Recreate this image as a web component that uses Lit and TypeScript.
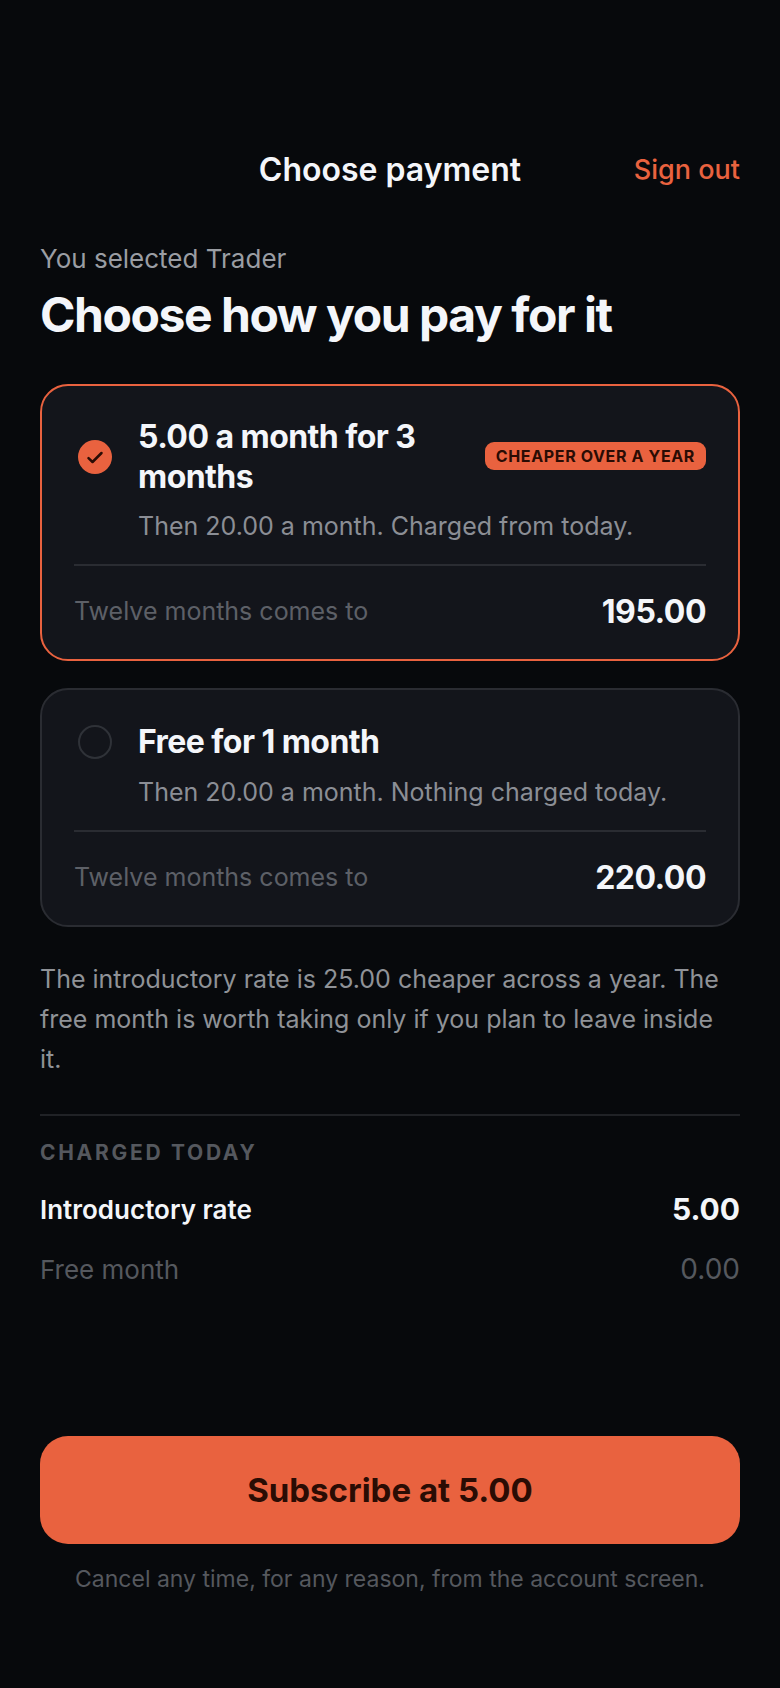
import { LitElement, html, css } from "lit";
import { customElement } from "lit/decorators.js";

@customElement("app-root")
export class AppRoot extends LitElement {
  static styles = css`
    :host { display: block; font-family: Inter, "Liberation Sans", sans-serif; background: #07090c; color: #f4f6fa; }
    .page { box-sizing: border-box; height: 1688px; padding: 148px 40px 0; display: flex; flex-direction: column; }
    .top { display: grid; grid-template-columns: 1fr auto 1fr; align-items: center; height: 42px; }
    .title { grid-column: 2; font-size: 32px; font-weight: 600; color: #f4f6fa; }
    .out { justify-self: end; font-size: 27px; font-weight: 500; color: #e9623f; }
    .sel { margin-top: 51px; font-size: 26px; line-height: 36px; color: #9a9da3; }
    h1 { margin: 8px 0 0; font-size: 48px; line-height: 60px; font-weight: 700; letter-spacing: -1.44px; color: #f4f6fa; }
    .cards { margin-top: 39px; display: flex; flex-direction: column; gap: 27px; }
    .card { background: #13151b; border: 2px solid #2a2c32; border-radius: 28px; padding: 31px 32px 24px; }
    .card.on { border-color: #e9623f; }
    .head { display: flex; align-items: center; gap: 26px; padding-left: 4px; min-height: 42px; }
    .radio { flex: none; box-sizing: border-box; width: 34px; height: 34px; border-radius: 50%; border: 2px solid #2f3238; display: flex; align-items: center; justify-content: center; }
    .on .radio { background: #e9623f; border: none; }
    .name { flex: 1; font-size: 32px; line-height: 40px; font-weight: 700; letter-spacing: -0.55px; color: #f4f6fa; }
    .badge { flex: none; background: #e9623f; color: #2a0c04; font-size: 16px; line-height: 28px; font-weight: 700; letter-spacing: 0.64px; padding: 0 11px; border-radius: 9px; margin-bottom: 2px; }
    .sub { margin: 11px 0 0 64px; font-size: 25px; line-height: 36px; color: #8b8e95; }
    .line { height: 2px; background: #2a2c32; margin-top: 20px; }
    .foot { display: flex; justify-content: space-between; align-items: center; margin-top: 21px; height: 48px; }
    .foot span { font-size: 25px; color: #5d6067; }
    .foot b { font-size: 32px; font-weight: 700; letter-spacing: -0.5px; color: #f4f6fa; }
    .note { margin: 32px 0 0; font-size: 25px; line-height: 40px; color: #8f9297; }
    .rule { height: 2px; background: #202226; margin-top: 35px; }
    .label { margin-top: 24px; font-size: 21px; line-height: 26px; font-weight: 700; letter-spacing: 2.7px; color: #55585e; }
    .row { display: flex; justify-content: space-between; align-items: center; }
    .r1 { margin-top: 21px; height: 44px; }
    .r1 span { font-size: 26px; font-weight: 600; color: #f4f6fa; }
    .r1 b { font-size: 30px; font-weight: 700; color: #f4f6fa; }
    .r2 { margin-top: 16px; height: 44px; font-size: 26px; color: #55585e; }
    .r2 span + span { font-size: 28px; }
    .cta { margin-top: auto; height: 108px; border-radius: 28px; background: #e9623f; color: #2a0c04; display: flex; align-items: center; justify-content: center; font-size: 33px; font-weight: 700; }
    .fine { margin: 18px 0 92px; text-align: center; font-size: 23px; line-height: 34px; color: #55585e; }
  `;

  private plan(on: boolean, name: string, sub: string, total: string) {
    return html`<div class="card ${on ? "on" : ""}">
      <div class="head">
        <div class="radio">${on ? html`<svg width="34" height="34" viewBox="0 0 34 34" fill="none"><path d="M10.5 18.2l4 3.8 9-9" stroke="#2a0c04" stroke-width="2.5" stroke-linecap="round" stroke-linejoin="round"/></svg>` : ""}</div>
        <div class="name">${name}</div>
        ${on ? html`<div class="badge">CHEAPER OVER A YEAR</div>` : ""}
      </div>
      <div class="sub">${sub}</div>
      <div class="line"></div>
      <div class="foot"><span>Twelve months comes to</span><b>${total}</b></div>
    </div>`;
  }

  render() {
    return html`<div class="page">
      <div class="top"><div class="title">Choose payment</div><div class="out">Sign out</div></div>
      <div class="sel">You selected Trader</div>
      <h1>Choose how you pay for it</h1>
      <div class="cards">
        ${this.plan(true, "5.00 a month for 3 months", "Then 20.00 a month. Charged from today.", "195.00")}
        ${this.plan(false, "Free for 1 month", "Then 20.00 a month. Nothing charged today.", "220.00")}
      </div>
      <p class="note">The introductory rate is 25.00 cheaper across a year. The free month is worth taking only if you plan to leave inside it.</p>
      <div class="rule"></div>
      <div class="label">CHARGED TODAY</div>
      <div class="row r1"><span>Introductory rate</span><b>5.00</b></div>
      <div class="row r2"><span>Free month</span><span>0.00</span></div>
      <div class="cta">Subscribe at 5.00</div>
      <div class="fine">Cancel any time, for any reason, from the account screen.</div>
    </div>`;
  }
}
